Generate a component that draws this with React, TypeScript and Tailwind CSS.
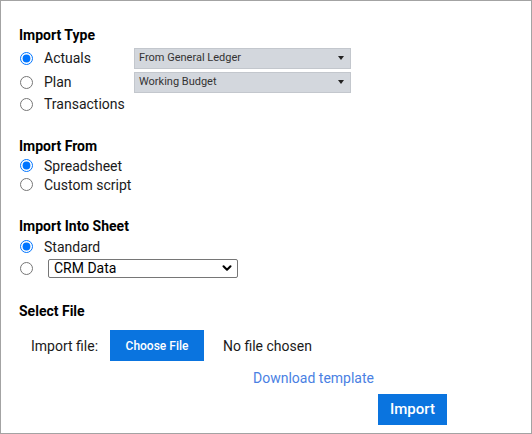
import { ChevronDown } from "lucide-react";

const font = { fontFamily: "Roboto, 'Liberation Sans', sans-serif" };

function Radio({ checked, name }: { checked?: boolean; name: string }) {
  return (
    <input
      type="radio"
      name={name}
      defaultChecked={checked}
      className="m-0 h-[13px] w-[13px] shrink-0 accent-[#0075ff]"
    />
  );
}

function GraySelect({ label }: { label: string }) {
  return (
    <div className="flex h-[21px] w-[217px] items-center justify-between border border-[#c3c7cd] bg-[#d3d7dd] pl-[4px] pr-[6px] text-[11px] text-[#333]">
      <span>{label}</span>
      <span className="h-0 w-0 border-x-[3px] border-t-[4px] border-x-transparent border-t-[#222]" />
    </div>
  );
}

export default function App() {
  return (
    <div
      style={font}
      className="h-[434px] w-[532px] border border-[#a3a3a3] bg-white pl-[18px] pt-[26px] text-[#1a1a1a]"
    >
      <h3 className="h-4 text-sm font-bold leading-4 text-black">Import Type</h3>
      <div className="mt-[4px] flex h-[22px] items-center">
        <div className="flex w-[115px] items-center gap-[11px] pl-[1px]">
          <Radio name="type" checked />
          <span className="text-sm">Actuals</span>
        </div>
        <GraySelect label="From General Ledger" />
      </div>
      <div className="mt-[2px] flex h-[22px] items-center">
        <div className="flex w-[115px] items-center gap-[11px] pl-[1px]">
          <Radio name="type" />
          <span className="text-sm">Plan</span>
        </div>
        <GraySelect label="Working Budget" />
      </div>
      <div className="flex h-[22px] items-center gap-[11px] pl-[1px]">
        <Radio name="type" />
        <span className="text-sm">Transactions</span>
      </div>

      <h3 className="mt-[23px] h-4 text-sm font-bold leading-4 text-black">Import From</h3>
      <div className="mt-[2px] flex h-[19px] items-center gap-[11px] pl-[1px]">
        <Radio name="from" checked />
        <span className="text-sm">Spreadsheet</span>
      </div>
      <div className="flex h-[19px] items-center gap-[11px] pl-[1px]">
        <Radio name="from" />
        <span className="text-sm">Custom script</span>
      </div>

      <h3 className="mt-[24px] h-4 text-sm font-bold leading-4 text-black">Import Into Sheet</h3>
      <div className="mt-[3px] flex h-[19px] items-center gap-[11px] pl-[1px]">
        <Radio name="sheet" checked />
        <span className="text-sm">Standard</span>
      </div>
      <div className="mt-[2px] flex h-[20px] items-center gap-[15px] pl-[1px]">
        <Radio name="sheet" />
        <div className="flex h-[19px] w-[190px] items-center justify-between rounded-[2px] border border-[#767676] bg-white pl-[5px] pr-[3px] text-sm text-black">
          <span>CRM Data</span>
          <ChevronDown size={14} strokeWidth={3.5} className="text-black" />
        </div>
      </div>

      <h3 className="mt-[25px] h-4 text-sm font-bold leading-4 text-black">Select File</h3>
      <div className="mt-[11px] flex h-[31px] items-center pl-[12px]">
        <span className="w-[79px] text-sm">Import file:</span>
        <button className="h-[31px] w-[94px] bg-[#0a74df] text-xs font-medium text-white">
          Choose File
        </button>
        <span className="ml-[19px] text-sm">No file chosen</span>
      </div>
      <div className="mt-[7px] pl-[234px] text-sm leading-5 text-[#4a7fe3]">Download template</div>
      <div className="mt-[6px] pl-[359px]">
        <button className="h-[31px] w-[69px] bg-[#0a74df] text-[15px] font-medium text-white">
          Import
        </button>
      </div>
    </div>
  );
}
